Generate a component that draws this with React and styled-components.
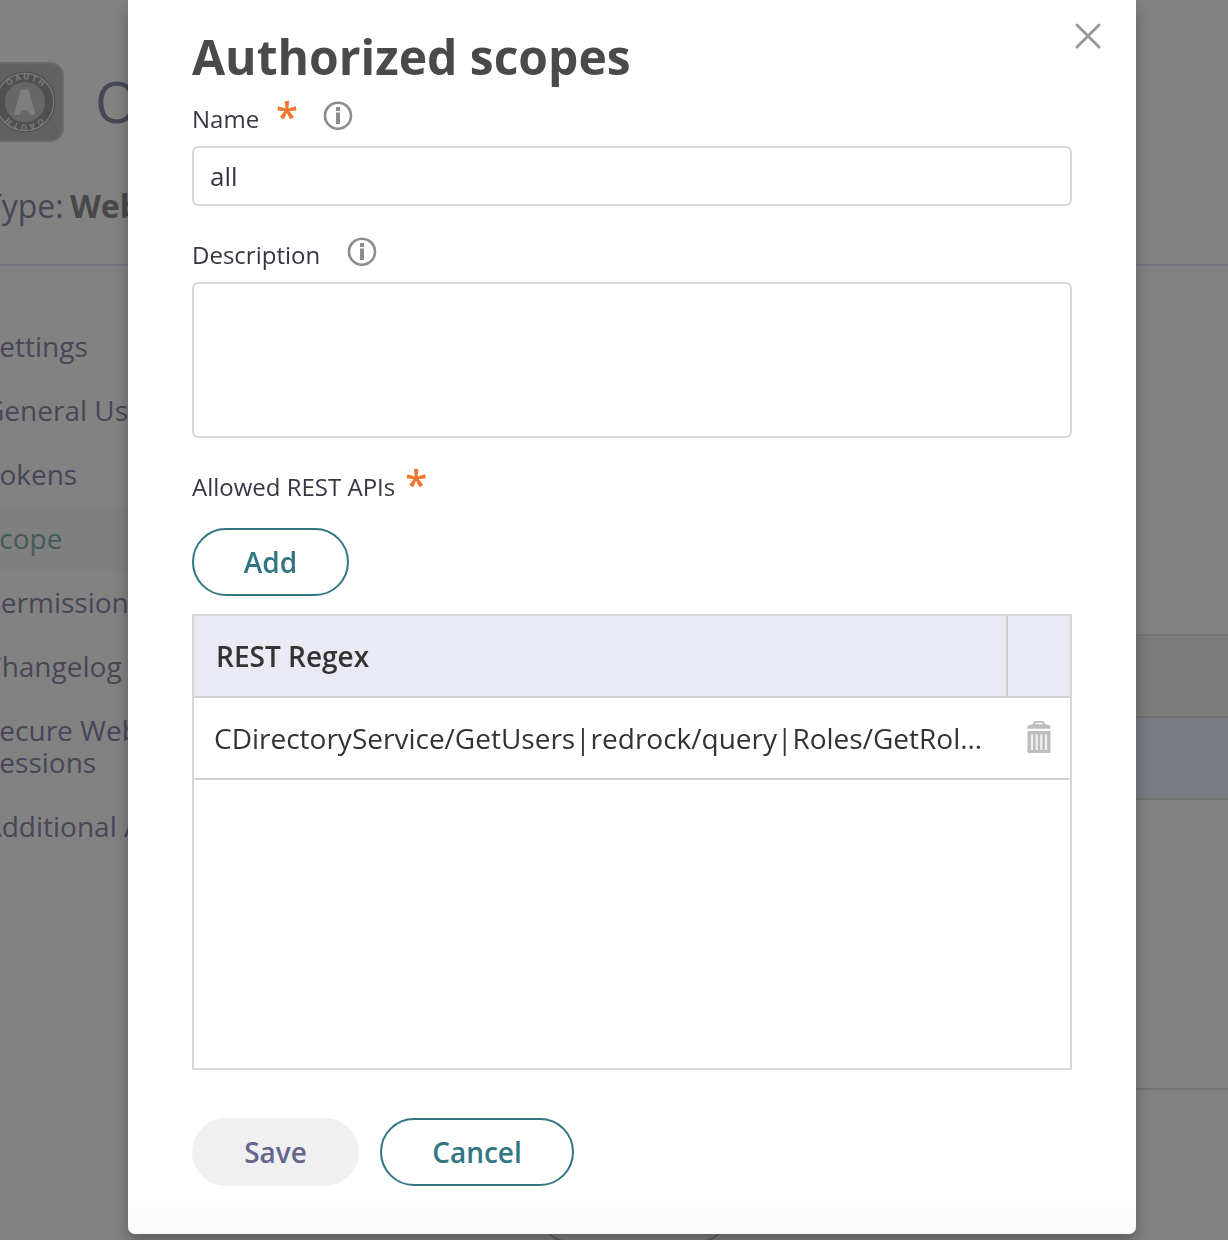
import styled, { createGlobalStyle } from 'styled-components'

const GlobalStyle = createGlobalStyle`
    * {
        box-sizing: border-box;
    }

    body {
        margin: 0;
        height: 1240px;
        overflow: hidden;
        background: #fff;
        font-family: 'Open Sans', 'Noto Sans', sans-serif;
    }
`

const Page = styled.div`
    width: 1244px;
    height: 1240px;
    margin-left: -16px;
    display: flex;
    flex-direction: column;
    overflow: hidden;
    color: #8a8cab;
`

const PageHeader = styled.header`
    height: 266px;
    flex: none;
    padding-top: 62px;
    border-bottom: 2px solid #e3e3f4;
`

const AppTitle = styled.div`
    display: flex;
    align-items: center;
    gap: 31px;
    height: 80px;
    font-size: 56px;
    line-height: 76px;
    white-space: nowrap;
`

const AppName = styled.span`
    padding-bottom: 2px;
`

const AppType = styled.p`
    margin: 42px 0 0;
    font-size: 32px;
    line-height: 44px;
    word-spacing: -2px;

    b {
        color: #8c8e8e;
    }
`

const PageBody = styled.div`
    display: flex;
    flex: 1;
`

const Sidebar = styled.ul`
    width: 260px;
    margin: 0;
    padding: 48px 0 0;
    list-style: none;
`

const SidebarItem = styled.li`
    padding: 16px 20px 16px 0;
    font-size: 28px;
    line-height: 32px;
    color: ${({ $active }) => ($active ? '#86b0b0' : 'inherit')};
    background: ${({ $active }) => ($active ? '#f9f9f9' : 'transparent')};
`

const Content = styled.div`
    flex: 1;
    padding-top: 368px;
`

const PageTable = styled.div`
    height: 456px;
    border: 2px solid #e0e0e0;
    border-width: 2px 0;
`

const PageTableRow = styled.div`
    height: 82px;
    border-bottom: 2px solid #e0e0e0;
    background: ${({ $selected }) => ($selected ? '#ebf1fb' : '#f2f2f2')};
`

const PageButton = styled.div`
    width: 194px;
    height: 68px;
    margin: 85px 0 0 293px;
    border: 2px solid #b4c6c6;
    border-radius: 34px;
`

const Overlay = styled.div`
    position: fixed;
    inset: 0;
    padding-left: 128px;
    background: rgba(0, 0, 0, 0.49);
`

const Dialog = styled.section`
    position: relative;
    width: 1008px;
    height: 1234px;
    padding: 24px 64px 0;
    border-radius: 0 0 7px 7px;
    background: linear-gradient(#fff 1195px, #f8f9f8);
    box-shadow: 0 8px 16px rgba(0, 0, 0, 0.3);
    color: #363741;
`

const CloseButton = styled.button`
    position: absolute;
    top: 20px;
    right: 32px;
    width: 32px;
    height: 32px;
    padding: 0;
    border: 0;
    background: none;
`

const Title = styled.h1`
    margin: 0;
    height: 68px;
    font-size: 48px;
    line-height: 65px;
    font-weight: 700;
    color: #4a4a4a;
`

const Label = styled.div`
    display: flex;
    height: 54px;
    font-size: 24px;
    line-height: 54px;
    white-space: nowrap;
`

const Required = styled.span`
    margin-left: ${({ $gap }) => $gap}px;
    font-size: 40px;
    font-weight: 600;
    line-height: 48px;
    color: #ee762f;
`

const InfoSvg = styled.svg`
    margin: 9px 0 0 ${({ $gap }) => $gap}px;
`

const Input = styled.input`
    display: block;
    width: 100%;
    height: 60px;
    margin-bottom: 22px;
    padding: 0 16px;
    border: 2px solid #d6d6d6;
    border-radius: 6px;
    outline: none;
    font: 26px 'Open Sans', sans-serif;
    color: #363741;
`

const TextArea = styled.textarea`
    display: block;
    width: 100%;
    height: 156px;
    margin-bottom: 22px;
    border: 2px solid #d6d6d6;
    border-radius: 6px;
    outline: none;
    resize: none;
`

const Button = styled.button`
    width: ${({ $width }) => $width}px;
    height: 68px;
    padding: 0;
    border: 2px solid ${({ $disabled }) => ($disabled ? '#f0f0f0' : '#317682')};
    border-radius: 34px;
    background: ${({ $disabled }) => ($disabled ? '#f0f0f0' : '#fff')};
    color: ${({ $disabled }) => ($disabled ? '#63668d' : '#317682')};
    font: 600 28px 'Open Sans', sans-serif;
`

const Toolbar = styled.div`
    display: flex;
    padding: 14px 0 18px;
`

const Table = styled.div`
    height: 456px;
    border: 2px solid #d6d6d6;
    color: #333;
    font-size: 28px;
`

const TableRow = styled.div`
    display: flex;
    height: 82px;
    border-bottom: 2px solid #d0d0d0;
    line-height: 80px;
    background: ${({ $head }) => ($head ? '#eaeaf4' : '#fff')};
    font-weight: ${({ $head }) => ($head ? 600 : 400)};
`

const RegexCell = styled.div`
    width: 814px;
    padding: 0 22px 0 ${({ $head }) => ($head ? 22 : 20)}px;
    border-right: 2px solid ${({ $head }) => ($head ? '#d0d0d0' : 'transparent')};
    overflow: hidden;
    text-overflow: ellipsis;
    white-space: nowrap;
`

const ActionCell = styled.div`
    display: flex;
    flex: 1;
    justify-content: center;
    padding-top: 22px;
`

const Footer = styled.footer`
    display: flex;
    gap: 21px;
    padding-top: 48px;
`

const menuItems = [
    'Settings',
    'General Usage',
    'Tokens',
    'Scope',
    'Permissions',
    'Changelog',
    'Secure Web Sessions',
    'Additional Apps',
]

function OAuthLogo() {
    return (
        <svg width="80" height="80" viewBox="0 0 80 80">
            <defs>
                <pattern id="mesh" width="4" height="4" patternUnits="userSpaceOnUse">
                    <path d="M0 0l4 4M4 0L0 4" stroke="#bdbdbd" strokeWidth=".6" />
                </pattern>
                <path id="arcTop" d="M18.5 40a22.5 22.5 0 0 1 45 0" />
                <path id="arcBottom" d="M63.5 40a22.5 22.5 0 0 1 -45 0" />
            </defs>
            <rect x="1" y="1" width="78" height="78" rx="13" fill="#bfbfbf" stroke="#d0d0d0" strokeWidth="2" />
            <circle cx="41" cy="40" r="30.5" fill="#9c9c9c" />
            <circle cx="41" cy="40" r="28.7" fill="#9e9e9e" stroke="#f0f0f0" strokeWidth="1.2" />
            <circle cx="41" cy="40" r="20" fill="#cecece" />
            <circle cx="41" cy="40" r="20" fill="url(#mesh)" />
            <path
                d="M38 29h5.500l6 22.500h-3l-1.800-4.500h-8l-1.800 4.500h-3z"
                fill="#f8f8f8"
                stroke="#f8f8f8"
                strokeWidth="3"
                strokeLinejoin="round"
            />
            <g fill="#ededed" fontSize="8" fontWeight="700" letterSpacing="2" textAnchor="middle">
                <text><textPath href="#arcTop" startOffset="52%">OAUTH</textPath></text>
                <text><textPath href="#arcBottom" startOffset="52%">OAUTH</textPath></text>
            </g>
        </svg>
    )
}

function InfoIcon({ gap }) {
    return (
        <InfoSvg $gap={gap} width="30" height="30" viewBox="0 0 30 30">
            <circle cx="15" cy="14.700" r="13" fill="none" stroke="#8d8d8d" strokeWidth="2.600" />
            <path d="M13 6h4v4h-4zM13 11.500h4v11.500h-4z" fill="#8d8d8d" />
        </InfoSvg>
    )
}

function TrashIcon() {
    return (
        <svg width="24" height="34" viewBox="0 0 24 34">
            <path d="M.5 8.800V5.800L6 4l1.500-3h9L18 4l5.500 1.800v3z" fill="#bdbdbd" />
            <path d="M8 4.300l1-1.600h6l1 1.600z" fill="#fff" />
            <path d="M.5 11h23v21a1 1 0 0 1-1 1h-21a1 1 0 0 1-1-1z" fill="#bdbdbd" />
            <path d="M5 14.500v15.500M9.700 14.500v15.500M14.300 14.500v15.500M19 14.500v15.500" stroke="#f1f1f1" strokeWidth="2.200" />
        </svg>
    )
}

function Background() {
    return (
        <Page>
            <PageHeader>
                <AppTitle>
                    <OAuthLogo />
                    <AppName>OAuth2 Client</AppName>
                </AppTitle>
                <AppType>Type: <b>Web App</b></AppType>
            </PageHeader>
            <PageBody>
                <Sidebar>
                    {menuItems.map((item) => (
                        <SidebarItem key={item} $active={item === 'Scope'}>{item}</SidebarItem>
                    ))}
                </Sidebar>
                <Content>
                    <PageTable>
                        <PageTableRow />
                        <PageTableRow $selected />
                    </PageTable>
                    <PageButton />
                </Content>
            </PageBody>
        </Page>
    )
}

function App() {
    return (
        <>
            <GlobalStyle />
            <Background />
            <Overlay>
                <Dialog>
                    <CloseButton>
                        <svg width="32" height="32" viewBox="0 0 32 32">
                            <path d="M5 5l22 22M27 5L5 27" stroke="#999" strokeWidth="3" strokeLinecap="round" />
                        </svg>
                    </CloseButton>
                    <Title>Authorized scopes</Title>
                    <Label>Name<Required $gap={17}>*</Required><InfoIcon gap={25} /></Label>
                    <Input defaultValue="all" />
                    <Label>Description<InfoIcon gap={27} /></Label>
                    <TextArea />
                    <Label>Allowed REST APIs<Required $gap={10}>*</Required></Label>
                    <Toolbar>
                        <Button $width={157}>Add</Button>
                    </Toolbar>
                    <Table>
                        <TableRow $head>
                            <RegexCell $head>REST Regex</RegexCell>
                            <ActionCell />
                        </TableRow>
                        <TableRow>
                            <RegexCell>CDirectoryService/GetUsers|redrock/query|Roles/GetRoleMembers</RegexCell>
                            <ActionCell><TrashIcon /></ActionCell>
                        </TableRow>
                    </Table>
                    <Footer>
                        <Button $disabled $width={167}>Save</Button>
                        <Button $width={194}>Cancel</Button>
                    </Footer>
                </Dialog>
            </Overlay>
        </>
    )
}

export default App
